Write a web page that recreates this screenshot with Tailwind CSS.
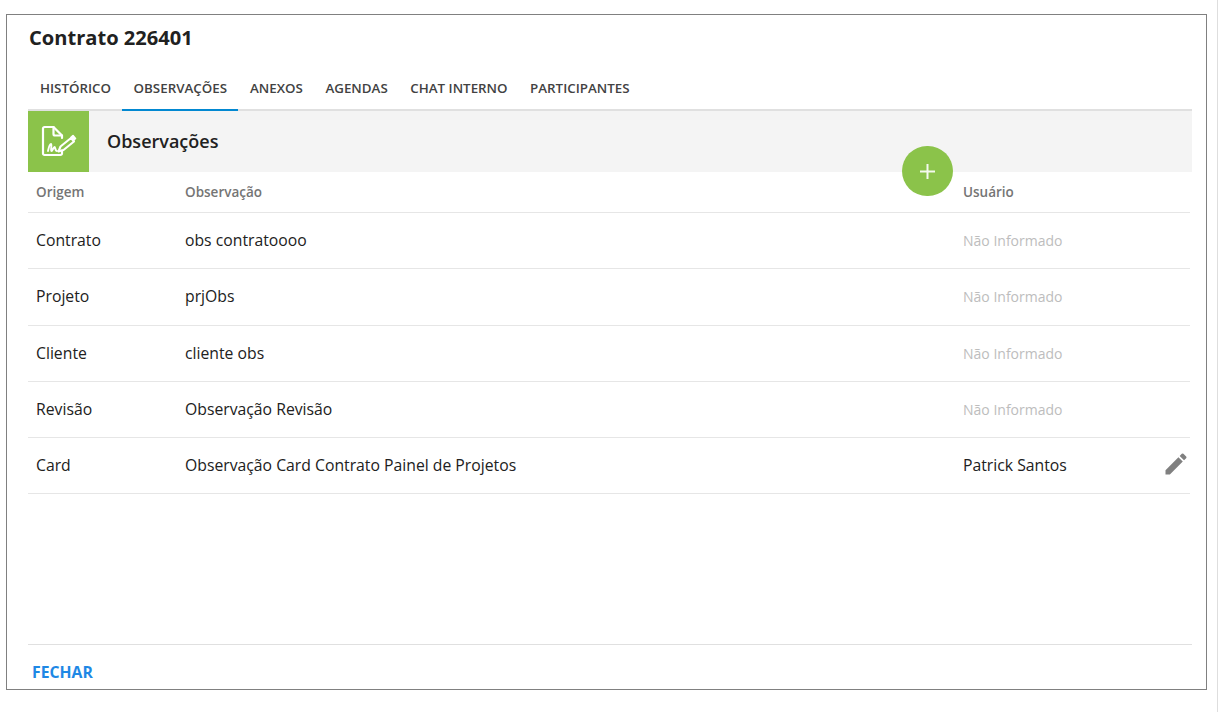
<!DOCTYPE html>
<html lang="pt">
<head>
<meta charset="utf-8">
<script src="https://cdn.jsdelivr.net/npm/@tailwindcss/browser@4"></script>
</head>
<body class="bg-white font-['Open_Sans',sans-serif] h-[712px] overflow-hidden">
<div class="flex h-[712px] w-[1218px]">
<div class="flex-1 pl-[6px] pt-[14px]">
<div class="relative flex flex-col w-[1201px] h-[676px] border border-[#808080] bg-white pl-[21px] pr-[14px]">
  <h1 class="h-[46px] pt-[7px] pl-[1px] text-[20.100px] leading-[32px] font-bold text-[#212121]">Contrato 226401</h1>
  <nav class="flex h-[50px] border-b-2 border-[#e0e0e0] text-[13.35px] font-semibold text-[#424242]">
    <a class="h-[50px] px-[12px] pt-[18px] leading-[19px]">HISTÓRICO</a>
    <a class="h-[50px] pl-[11.500px] pr-[11px] pt-[18px] leading-[19px] border-b-2 border-[#0288d1] -ml-[1px]">OBSERVAÇÕES</a>
    <a class="h-[50px] pl-[12px] pr-[11.500px] pt-[18px] leading-[19px]">ANEXOS</a>
    <a class="h-[50px] px-[11px] pt-[18px] leading-[19px]">AGENDAS</a>
    <a class="h-[50px] px-[11.500px] pt-[18px] leading-[19px]">CHAT INTERNO</a>
    <a class="h-[50px] px-[11px] pt-[18px] leading-[19px]">PARTICIPANTES</a>
  </nav>
  <div class="flex items-center h-[61px] bg-[#f4f4f4]">
    <div class="flex items-center justify-center w-[61px] h-[61px] bg-[#8bc34a]">
      <svg class="w-[38px] h-[34px] -mt-[2px]" viewBox="0 0 38 34" fill="none" stroke="#fff" stroke-width="2.200" stroke-linecap="round" stroke-linejoin="round">
        <path d="M22 26.500V29.500a1.500 1.500 0 0 1-1.500 1.500H4.500A1.500 1.500 0 0 1 3 29.500V4.500A1.500 1.500 0 0 1 4.500 3H13.500L22 11.500V14"/>
        <path d="M13.500 3v7a1.500 1.500 0 0 0 1.500 1.500h7"/>
        <path d="M8 27c1-5 2-7 3-7s-.5 7 .5 7 2-4 3-4 .5 4 2.500 4" stroke-width="1.900"/>
        <path d="M18.500 27.500l2-5 10.500-8.500 3 3.500-10.500 8.500z" stroke-width="2.100"/>
        <path d="M33 11.500l2.500 3-2 1.800-2.500-3z" fill="#fff" stroke-width="1.600"/>
      </svg>
    </div>
    <h2 class="ml-[18px] -mt-[2px] text-[18px] leading-[24px] font-semibold text-[#212121]">Observações</h2>
  </div>
  <div class="absolute left-[895px] top-[131px] flex items-center justify-center w-[51px] h-[50px] rounded-full bg-[#8bc34a]">
    <svg class="w-[15px] h-[15px] -ml-[1px]" viewBox="0 0 15 15" fill="none" stroke="#fff" stroke-opacity="0.9" stroke-width="2"><path d="M7.500 0v15M0 7.500h15"/></svg>
  </div>
  <table class="w-[1162px] table-fixed border-collapse text-[15.75px] text-[#212121]">
    <thead>
      <tr class="h-[40px] border-b border-[#e6e6e6] text-left text-[13.500px] font-semibold text-[#757575]">
        <th class="w-[149px] pl-[8px] font-semibold">Origem</th>
        <th class="w-[778px] pl-[8px] font-semibold">Observação</th>
        <th class="pl-[8px] font-semibold">Usuário</th>
      </tr>
    </thead>
    <tbody>
      <tr class="h-[56px] border-b border-[#e6e6e6]"><td class="pl-[8px] pt-[2px]">Contrato</td><td class="pl-[8px] pt-[2px]">obs contratoooo</td><td class="pl-[8px] text-[14px] text-[#bdbdbd]">Não Informado</td></tr>
      <tr class="h-[57px] border-b border-[#e6e6e6]"><td class="pl-[8px]">Projeto</td><td class="pl-[8px]">prjObs</td><td class="pl-[8px] text-[14px] text-[#bdbdbd]">Não Informado</td></tr>
      <tr class="h-[56px] border-b border-[#e6e6e6]"><td class="pl-[8px] pt-[2px]">Cliente</td><td class="pl-[8px] pt-[2px]">cliente obs</td><td class="pl-[8px] text-[14px] text-[#bdbdbd]">Não Informado</td></tr>
      <tr class="h-[56px] border-b border-[#e6e6e6]"><td class="pl-[8px] pt-[2px]">Revisão</td><td class="pl-[8px] pt-[2px]">Observação Revisão</td><td class="pl-[8px] text-[14px] text-[#bdbdbd]">Não Informado</td></tr>
      <tr class="h-[56px] border-b border-[#e6e6e6]">
        <td class="pl-[8px] pt-[2px]">Card</td>
        <td class="pl-[8px] pt-[2px]">Observação Card Contrato Painel de Projetos</td>
        <td class="pl-[8px]">
          <div class="flex items-center justify-between">
            <span class="pt-[2px]">Patrick Santos</span>
            <svg class="w-[28px] h-[28px] -mt-[2px]" viewBox="0 0 24 24" fill="#808080"><path d="M3 17.250V21h3.750L17.810 9.940l-3.750-3.750L3 17.250zM20.710 7.040a1 1 0 0 0 0-1.410l-2.340-2.340a1 1 0 0 0-1.410 0l-1.830 1.830 3.750 3.750 1.830-1.830z"/></svg>
          </div>
        </td>
      </tr>
    </tbody>
  </table>
  <div class="mt-auto h-[45px] border-t border-[#e0e0e0] pl-[4px] pt-[15px]">
    <button class="text-[15.75px] leading-[22px] font-bold text-[#1e88e5]">FECHAR</button>
  </div>
</div>
</div>
<div class="w-[1px] h-[712px] bg-[#dedede]"></div>
</div>
</body>
</html>
